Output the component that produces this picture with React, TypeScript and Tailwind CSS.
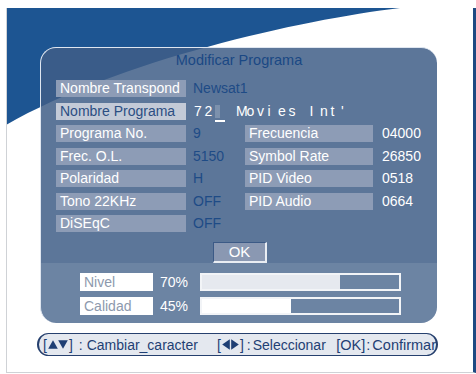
import React from 'react';

const FONT = "font-['Liberation_Sans',Arial,sans-serif]";
const LABEL = 'h-[17px] w-[130px] shrink-0 pl-[4px] leading-[17px] bg-[#8d9cb6] text-white whitespace-nowrap overflow-hidden';
const RLABEL = 'h-[17px] w-[128px] shrink-0 pl-[4px] leading-[17px] bg-[#8d9cb6] text-white whitespace-nowrap';

interface Row {
  label: string;
  value: string;
  right?: [string, string];
}

const rows: Row[] = [
  { label: 'Programa No.', value: '9', right: ['Frecuencia', '04000'] },
  { label: 'Frec. O.L.', value: '5150', right: ['Symbol Rate', '26850'] },
  { label: 'Polaridad', value: 'H', right: ['PID Video', '0518'] },
  { label: 'Tono 22KHz', value: 'OFF', right: ['PID Audio', '0664'] },
  { label: 'DiSEqC', value: 'OFF' },
];

const nameChars = ['7', '2', '|', ' ', 'M', 'o', 'v', 'i', 'e', 's', ' ', 'I', 'n', 't', "'"];

const Up = () => (
  <svg width="10" height="9" viewBox="0 0 10 9" className="block">
    <path d="M5 0.3 L9.8 8.7 L0.2 8.7 Z" fill="#1f3f74" />
  </svg>
);
const Down = () => (
  <svg width="10" height="9" viewBox="0 0 10 9" className="block">
    <path d="M0.2 0.3 L9.8 0.3 L5 8.7 Z" fill="#1f3f74" />
  </svg>
);
const Left = () => (
  <svg width="8" height="11" viewBox="0 0 8 11" className="block">
    <path d="M7.8 0.2 L7.8 10.8 L0.2 5.5 Z" fill="#1f3f74" />
  </svg>
);
const Right = () => (
  <svg width="8" height="11" viewBox="0 0 8 11" className="block">
    <path d="M0.2 0.2 L0.2 10.8 L7.8 5.5 Z" fill="#1f3f74" />
  </svg>
);

const Bar: React.FC<{ pct: number; fill: string }> = ({ pct, fill }) => (
  <div className="h-[18px] w-[201px] border-2 border-[#f2f4f7]">
    <div className={`h-full ${fill}`} style={{ width: `${pct}%` }} />
  </div>
);

export default function App() {
  return (
    <div className={`relative w-[476px] h-[374px] bg-white overflow-hidden pt-[8px] pl-[6px] ${FONT} text-[14px]`}>
      <svg className="absolute left-0 top-0" width="476" height="374" viewBox="0 0 476 374">
        <path d="M6 8 H400 C300 20 120 60 6 125 Z" fill="#1d5592" />
      </svg>

      <div className="relative w-[470px] h-[365px] border-l border-b border-[#cfd2d6] border-r-[3px] border-r-[#1e4a82] pl-[33px] pt-[39px]">
        {/* main panel */}
        <div className="w-[397px] h-[276px] rounded-[16px] overflow-hidden bg-[rgba(63,94,135,0.85)] border-t border-l border-[#dfe6f0] flex flex-col">
          <div className="pt-[4px] leading-[16px] text-center text-[#1a4884] text-[14.5px]">Modificar Programa</div>

          <div className="mt-[12px] pl-[15px] flex flex-col gap-[5.5px]">
            <div className="flex">
              <div className={LABEL}>Nombre Transpond</div>
              <div className="ml-[7px] leading-[17px] text-[#1e4b86]">Newsat1</div>
            </div>
            <div className="flex">
              <div className={`${LABEL} !bg-[#c3cad7] !text-[#2b4e82]`}>Nombre Programa</div>
              <div className="ml-[8px] flex leading-[17px] text-white">
                {nameChars.map((c, i) =>
                  c === '|' ? (
                    <span key={i} className="relative w-[10.5px] h-[17px]">
                      <span className="absolute left-0 top-[2px] w-[5px] h-[13px] bg-white/20" />
                      <span className="absolute left-0 -bottom-[2px] w-[10px] h-[2px] bg-white" />
                    </span>
                  ) : (
                    <span key={i} className="w-[10.5px] whitespace-pre">{c}</span>
                  )
                )}
              </div>
            </div>
            {rows.map((r) => (
              <div key={r.label} className="flex">
                <div className={LABEL}>{r.label}</div>
                <div className="ml-[7px] w-[52px] leading-[17px] text-[#1e4b86]">{r.value}</div>
                {r.right && (
                  <>
                    <div className={RLABEL}>{r.right[0]}</div>
                    <div className="ml-[9px] leading-[17px] text-white">{r.right[1]}</div>
                  </>
                )}
              </div>
            ))}
          </div>

          <div className="mt-[10px] pl-[172px]">
            <div className="w-[54px] h-[21px] bg-[#8a98b2] border-t border-l border-[#3c5a86] border-b-2 border-r-2 border-b-[#e9edf3] border-r-[#e9edf3] text-white text-center leading-[18px] text-[15px]">
              OK
            </div>
          </div>

          <div className="flex-1 bg-white/10 pt-[10px] pl-[39px] flex flex-col gap-[6px]">
            <div className="flex items-center">
              <div className="w-[73px] h-[18px] bg-white text-[#8d99ad] pl-[4px] leading-[18px]">Nivel</div>
              <div className="w-[47px] pl-[7px] text-white leading-[18px]">70%</div>
              <Bar pct={70} fill="bg-[#e6e9ef]" />
            </div>
            <div className="flex items-center">
              <div className="w-[73px] h-[18px] bg-white text-[#8d99ad] pl-[4px] leading-[18px]">Calidad</div>
              <div className="w-[47px] pl-[7px] text-white leading-[18px]">45%</div>
              <Bar pct={45} fill="bg-white" />
            </div>
          </div>
        </div>

        {/* help bar */}
        <div className="mt-[10px] -ml-[3px] w-[401px] h-[23px] rounded-full border-[1.5px] border-x-2 border-[#26406e] bg-[#e4e8ef] flex items-center pl-[4px] text-[#1f3f74] leading-[20px] whitespace-nowrap">
          <span className="w-[175px] flex items-center">
            [<span className="ml-[1px] flex"><Up /><Down /></span>
            <span className="ml-[1px]">]</span>
            <span className="ml-[6px]">:</span>
            <span className="ml-[4px]">Cambiar_caracter</span>
          </span>
          <span className="w-[120px] flex items-center">
            [<span className="ml-[1px] flex gap-[1px]"><Left /><Right /></span>
            <span className="ml-[1px]">]</span>
            <span className="ml-[3px]">:</span>
            <span className="ml-[2px]">Seleccionar</span>
          </span>
          <span className="flex items-center text-[14.5px]">
            [OK]<span className="ml-[1px]">:</span>
            <span className="ml-[2px]">Confirmar</span>
          </span>
        </div>
      </div>
    </div>
  );
}
